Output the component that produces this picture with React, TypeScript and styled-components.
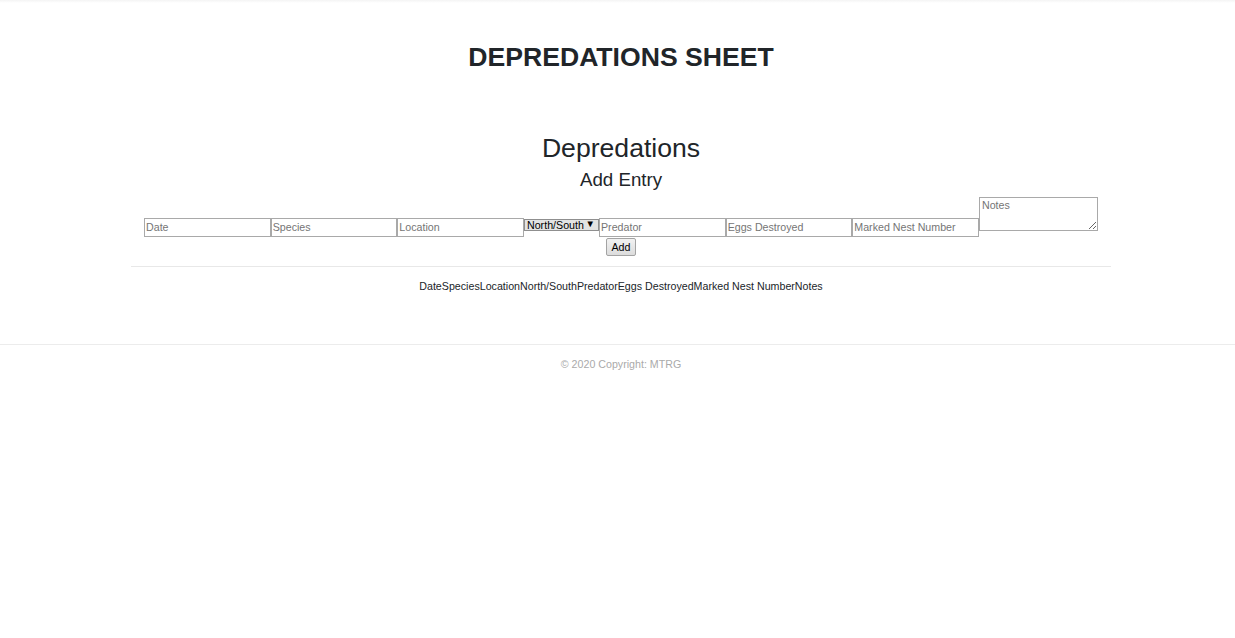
import React from "react";
import styled, { createGlobalStyle } from "styled-components";

const Global = createGlobalStyle`
  html, body { margin: 0; padding: 0; background: #fff; }
  body {
    font-family: "Liberation Sans", Arial, sans-serif;
    color: #212529;
  }
  * { box-sizing: border-box; }
`;

const Page = styled.div`
  display: flex;
  flex-direction: column;
  align-items: stretch;
  min-height: 638px;
`;

const TopBar = styled.div`
  height: 3px;
  background: linear-gradient(#f4f4f4, #ffffff);
`;

const Main = styled.main`
  display: flex;
  flex-direction: column;
  align-items: center;
  padding-left: 7px;
`;

const SheetTitle = styled.h1`
  margin: 39px 0 0;
  font-size: 26.6px;
  line-height: 30px;
  font-weight: 700;
`;

const SectionTitle = styled.h2`
  margin: 61px 0 0;
  font-size: 26.6px;
  line-height: 30px;
  font-weight: 400;
`;

const SubTitle = styled.h3`
  margin: 6px 0 0;
  font-size: 18.7px;
  line-height: 22px;
  font-weight: 400;
`;

const Form = styled.form`
  display: flex;
  flex-direction: column;
  align-items: center;
  margin-top: 6px;
`;

const FieldRow = styled.div`
  display: flex;
  align-items: flex-end;
`;

const TextField = styled.input`
  width: 126.67px;
  height: 19px;
  margin: 0;
  padding: 0 1px 1px;
  border: 1px solid #a9a9a9;
  font-family: "Liberation Sans", Arial, sans-serif;
  font-size: 10.67px;
  color: #000;
  background: #fff;
  &::placeholder { color: #757575; }
`;

const SelectWrap = styled.span`
  position: relative;
  display: inline-flex;
  margin-bottom: 6px;
`;

const Select = styled.select`
  appearance: none;
  width: 75px;
  height: 12px;
  margin: 0;
  padding: 0 12px 0 2px;
  border: 1px solid #8f8f8f;
  border-radius: 0;
  background: #e3e3e3;
  font-family: "Liberation Sans", Arial, sans-serif;
  font-size: 10.67px;
  line-height: 10px;
  color: #000;
`;

const Caret = styled.span`
  position: absolute;
  right: 4px;
  top: 0;
  font-size: 9.5px;
  line-height: 10px;
  color: #000;
  pointer-events: none;
`;

const Notes = styled.textarea`
  width: 119px;
  height: 34px;
  margin: 0 0 6px;
  padding: 1px 2px;
  border: 1px solid #a9a9a9;
  font-family: "Liberation Sans", Arial, sans-serif;
  font-size: 10.67px;
  &::placeholder { color: #757575; }
`;

const AddButton = styled.button`
  margin-top: 1px;
  width: 30px;
  height: 18px;
  padding: 0;
  border: 1px solid #a3a3a3;
  border-radius: 2px;
  background: linear-gradient(#f2f2f2, #dcdcdc);
  font-family: "Liberation Sans", Arial, sans-serif;
  font-size: 10.67px;
  color: #000;
`;

const Rule = styled.hr`
  width: 980px;
  margin: 10px 0 0;
  border: 0;
  border-top: 1px solid #e8e8e8;
`;

const Table = styled.table`
  margin-top: 13px;
  border-collapse: collapse;
  font-size: 10.67px;
  line-height: 13px;
`;

const HeadCell = styled.th`
  padding: 0;
  font-weight: 400;
  white-space: nowrap;
`;

const Footer = styled.footer`
  margin-top: 51px;
  border-top: 1px solid #ececec;
  padding: 13px 0 0 7px;
  text-align: center;
  font-size: 10.67px;
  line-height: 13px;
  color: #aaaaaa;
`;

const fields = ["Date", "Species", "Location"];
const fields2 = ["Predator", "Eggs Destroyed", "Marked Nest Number"];
const columns = [
  "Date",
  "Species",
  "Location",
  "North/South",
  "Predator",
  "Eggs Destroyed",
  "Marked Nest Number",
  "Notes",
];

export default function App() {
  return (
    <Page>
      <Global />
      <TopBar />
      <Main>
        <SheetTitle>DEPREDATIONS SHEET</SheetTitle>
        <SectionTitle>Depredations</SectionTitle>
        <SubTitle>Add Entry</SubTitle>
        <Form onSubmit={(e) => e.preventDefault()}>
          <FieldRow>
            {fields.map((f) => (
              <TextField key={f} placeholder={f} />
            ))}
            <SelectWrap>
              <Select defaultValue="ns">
                <option value="ns">North/South</option>
                <option value="n">North</option>
                <option value="s">South</option>
              </Select>
              <Caret>▼</Caret>
            </SelectWrap>
            {fields2.map((f) => (
              <TextField key={f} placeholder={f} />
            ))}
            <Notes placeholder="Notes" />
          </FieldRow>
          <AddButton type="submit">Add</AddButton>
        </Form>
        <Rule />
        <Table>
          <thead>
            <tr>
              {columns.map((c) => (
                <HeadCell key={c}>{c}</HeadCell>
              ))}
            </tr>
          </thead>
        </Table>
      </Main>
      <Footer>© 2020 Copyright: MTRG</Footer>
    </Page>
  );
}
